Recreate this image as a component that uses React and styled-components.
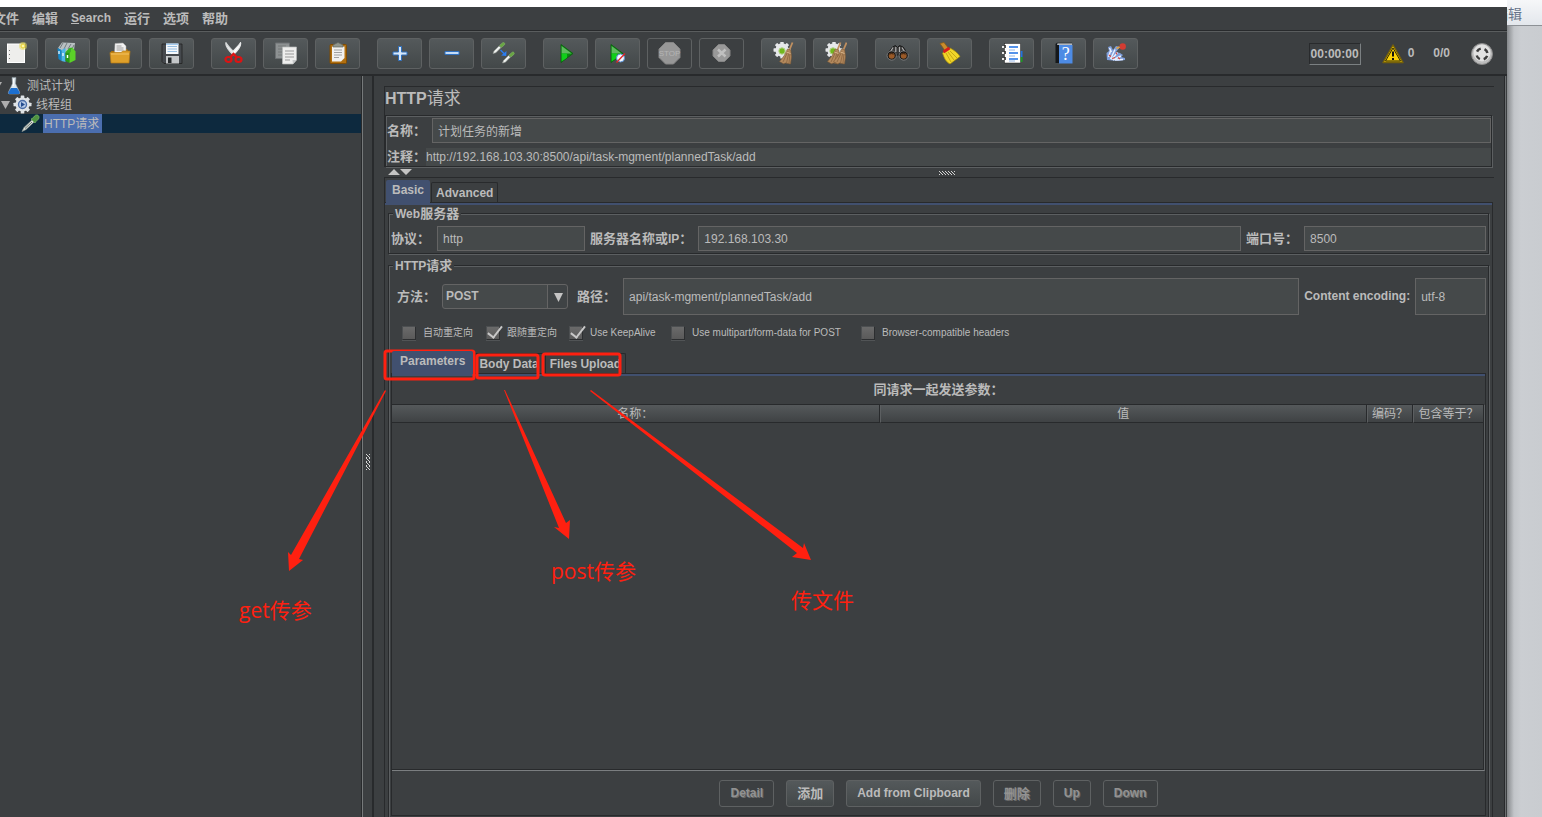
import React from 'react';
import styled, { createGlobalStyle, css } from 'styled-components';

const dark = '#282a2c';
const light = '#5c5f61';
const panel = '#3c3f41';
const text = '#bbbbbb';
const red = '#ff2010';

const GlobalStyle = createGlobalStyle`
  * {
    box-sizing: border-box;
  }
  html, body, #root {
    height: 100%;
  }
  body {
    margin: 0;
    overflow: hidden;
    background: #c9cdd1;
    color: ${text};
    font-family: 'Liberation Sans', 'Noto Sans CJK SC', sans-serif;
    font-size: 12px;
    line-height: 17px;
  }
  button, input, select {
    color: inherit;
    font: inherit;
  }
`;

const Screen = styled.div`
  position: relative;
  display: flex;
  height: 100%;
  overflow: hidden;
`;

const AppWindow = styled.div`
  display: flex;
  flex: 1;
  flex-direction: column;
  min-width: 0;
  margin-left: -7px;
  border-top: 7px solid #fff;
  background: ${panel};
`;

const Behind = styled.aside`
  flex: 0 0 35px;
  overflow: hidden;
  background: linear-gradient(90deg, #85888b, #c2c5c9 7px, #cbced2 14px, #c9ccd0);
`;

const BehindTab = styled.div`
  display: flex;
  justify-content: flex-end;
  width: 15px;
  height: 25px;
  padding-top: 6px;
  color: #66748a;
  font-size: 14px;
  white-space: nowrap;
`;

const BehindHeader = styled.div`
  height: 26px;
  border-bottom: 1px solid #8d9196;
  background: linear-gradient(#f6f7f9, #e3e7ec);
`;

const Cjk = styled.span`
  font-size: 13px;
`;

const MenuBar = styled.nav`
  display: flex;
  flex: none;
  gap: 13px;
  height: 25px;
  padding-bottom: 1px;
  border-bottom: 1px solid #5a5d5e;
  box-shadow: inset 0 -1px 0 ${dark};
`;

const MenuItem = styled.button`
  padding: 0;
  border: 0;
  background: none;
  font-weight: bold;
  line-height: 17px;
  white-space: nowrap;
`;

const Toolbar = styled.div`
  display: flex;
  flex: none;
  gap: 17px;
  height: 44px;
  padding: 6px 14px 5px 0;
  border-bottom: 2px solid ${dark};
`;

const ToolGroup = styled.div`
  display: flex;
  gap: 7px;
`;

const buttonFace = css`
  border: 1px solid #5e6162;
  border-radius: 3px;
  background: ${(p) => (p.disabled ? 'none' : 'linear-gradient(#54595b, #434849)')};
`;

const ToolButton = styled.button`
  ${buttonFace}
  display: flex;
  align-items: center;
  justify-content: center;
  width: 45px;
  height: 31px;
  padding: 0;
`;

const Status = styled.div`
  display: flex;
  align-items: center;
  height: 31px;
  margin-left: auto;
  font-weight: bold;
`;

const Timer = styled.span`
  height: 22px;
  padding: 0 1px;
  border: 1px solid;
  border-color: ${dark} #7b8082 #7b8082 ${dark};
  line-height: 20px;
`;

const StatusItem = styled.span`
  display: flex;
  gap: 4px;
  align-items: center;
  margin-left: ${(p) => p.$gap}px;
`;

const Main = styled.div`
  display: flex;
  flex: 1;
  min-height: 0;
`;

const Tree = styled.ul`
  flex: 0 0 370px;
  margin: 0;
  padding: 0 1px 0 0;
  border-right: 1px solid #76797a;
  box-shadow: inset -1px 0 0 ${dark};
  list-style: none;
`;

const TreeRow = styled.li`
  display: flex;
  align-items: center;
  gap: ${(p) => p.$gap || 3}px;
  height: 19px;
  padding-left: ${(p) => p.$indent}px;
  background: ${(p) => (p.$selected ? '#0d293e' : 'none')};
`;

const TreeLabel = styled.span`
  height: 19px;
  padding: 1px 3px 0 1px;
  background: ${(p) => (p.$selected ? '#4b6eaf' : 'none')};
  line-height: 18px;
`;

const Splitter = styled.div`
  display: flex;
  flex: 0 0 9px;
  align-items: center;
  justify-content: center;
  padding-top: 30px;
`;

const Editor = styled.main`
  display: flex;
  flex: 1;
  flex-direction: column;
  min-width: 0;
  margin-right: 1px;
  padding: 10px 11px 0 10px;
  border-right: 1px solid #6b6e70;
  border-left: 2px solid ${dark};
  box-shadow: inset -1px 0 0 ${dark};
`;

const etched = css`
  border: 1px solid ${dark};
  box-shadow: 1px 1px 0 ${light}, inset 1px 1px 0 ${light};
`;

const NamePanel = styled.section`
  flex: none;
  padding-right: 2px;
  border-top: 1px solid ${dark};
  border-left: 1px solid ${dark};
`;

const Title = styled.h1`
  height: 28px;
  margin: 0;
  font-size: 16px;
  line-height: 24px;
`;

const TitleCjk = styled.span`
  font-size: 17px;
  font-weight: normal;
`;

const NameBox = styled.div`
  ${etched}
  display: flex;
  flex-direction: column;
  gap: 5px;
  padding: 2px 0 0 1px;
`;

const Row = styled.div`
  display: flex;
  align-items: center;
`;

const Label = styled.label`
  flex: none;
  margin-right: ${(p) => (p.$right === undefined ? 7 : p.$right)}px;
  margin-left: ${(p) => p.$left || 0}px;
  font-weight: bold;
  white-space: nowrap;
`;

const Field = styled.input`
  flex: ${(p) => p.$size || 100} 1 ${(p) => p.$size || 100}px;
  min-width: 0;
  height: ${(p) => p.$height || 25}px;
  padding: 0 5px;
  border: 1px solid #646464;
  border-radius: 0;
  outline: 0;
  background: #45494a;
`;

const PlainField = styled(Field)`
  height: 18px;
  padding: 0;
  border: 0;
`;

const Divider = styled.div`
  display: flex;
  flex: none;
  align-items: center;
  justify-content: space-between;
  height: 10px;
  padding: 1px 0 0 4px;
`;

const DividerSpacer = styled.span`
  width: 12px;
`;

const TabPanel = styled.section`
  display: flex;
  flex: 1;
  flex-direction: column;
  min-height: 0;
  ${(p) =>
    p.$outer &&
    css`
      border-top: 1px solid ${dark};
      border-left: 1px solid ${dark};
    `}
`;

const Tabs = styled.div`
  display: flex;
  flex: none;
  gap: 1px;
  align-items: flex-end;
  height: ${(p) => p.$height}px;
  padding-left: 1px;
`;

const Tab = styled.button`
  height: 20px;
  padding: 2px 4px 0;
  border: 1px solid ${dark};
  border-bottom: 0;
  border-radius: 2px 2px 0 0;
  background: none;
  font-weight: bold;
  line-height: 17px;
  white-space: nowrap;
  ${(p) =>
    p['aria-selected'] &&
    css`
      z-index: 1;
      height: 23px;
      margin-bottom: -1px;
      padding: 0 ${p.$wide ? 8 : 6}px 2px;
      border: 0;
      background: #41506f;
    `}
`;

const Pane = styled.div`
  display: flex;
  flex: 1;
  flex-direction: column;
  min-height: 0;
  margin-right: 1px;
  padding: 2px 3px 0;
  border-top: 1px solid ${dark};
  border-right: 1px solid ${dark};
  box-shadow: inset 0 2px 0 #41506f;
`;

const InnerPane = styled(Pane)`
  margin: 0;
  padding: 0;
  border: 1px solid ${dark};
`;

const Group = styled.fieldset`
  ${etched}
  flex: none;
  min-width: 0;
  margin: 0 0 3px;
  padding: 4px 2px 2px;
`;

const RequestGroup = styled(Group)`
  display: flex;
  flex: 1;
  flex-direction: column;
  min-height: 0;
  margin: 0 0 -2px;
  padding: 4px 2px 2px;
`;

const Legend = styled.legend`
  height: 17px;
  margin-left: 2px;
  padding: 0 2px;
  background: ${panel};
  font-weight: bold;
`;

const SelectWrap = styled.div`
  position: relative;
  flex: 0 0 126px;
  height: 25px;
`;

const Select = styled.select`
  width: 100%;
  height: 25px;
  padding: 0 3px;
  border: 1px solid #646464;
  border-radius: 3px;
  appearance: none;
  background: linear-gradient(90deg, #45494a 104px, #646464 104px, #646464 105px, #3f4345 105px);
  font-weight: bold;
`;

const SelectArrow = styled.svg`
  position: absolute;
  top: 9px;
  right: 5px;
  pointer-events: none;
`;

const Checks = styled.div`
  display: grid;
  flex: none;
  grid-template-columns: 84px 83px 102px 190px auto;
  align-items: center;
  height: 35px;
  padding-left: 11px;
`;

const Check = styled.label`
  display: flex;
  gap: 7px;
  align-items: center;
  font-size: 10px;
  white-space: nowrap;
`;

const CheckBox = styled.input`
  flex: none;
  width: 14px;
  height: 14px;
  margin: 0;
  border: 1px solid;
  border-color: #4c4f51 #2c2e30 #2c2e30 #4c4f51;
  appearance: none;
  background: linear-gradient(#6a6a6a, #5a5a5a);
  box-shadow: 0 1px 0 #515456;

  &:checked::after {
    content: '';
    display: block;
    width: 6px;
    height: 13px;
    margin: -4px 0 0 4px;
    border: solid #c8c8c8;
    border-width: 0 2px 2px 0;
    transform: rotate(38deg);
  }
`;

const Caption = styled.div`
  flex: none;
  height: 30px;
  padding-top: 7px;
  font-weight: bold;
  text-align: center;
`;

const TableBox = styled.div`
  flex: 1;
  min-height: 0;
  border-top: 1px solid ${dark};
  border-right: 1px solid ${light};
  border-bottom: 1px solid #7b7e80;
  box-shadow: inset -1px -1px 0 ${dark};
`;

const Table = styled.table`
  width: 100%;
  border-spacing: 0;
  table-layout: fixed;
`;

const Th = styled.th`
  width: ${(p) => p.$width || 'auto'};
  height: 18px;
  padding: 1px 0 0;
  border-right: 1px solid ${dark};
  border-bottom: 1px solid ${dark};
  background: linear-gradient(#55595b, #3f4244);
  font-weight: normal;
  line-height: 16px;
  white-space: nowrap;

  & + & {
    border-left: 1px solid ${light};
  }
`;

const Actions = styled.div`
  display: flex;
  flex: none;
  gap: 12px;
  justify-content: center;
  padding: 9px 0 8px;
`;

const Action = styled.button`
  ${buttonFace}
  height: 27px;
  padding: 0 10px;
  font-weight: bold;
  white-space: nowrap;
  ${(p) =>
    p.disabled &&
    css`
      color: #929292;
      text-shadow: 1px 1px 0 #6a6a6a;
    `}
`;

const Marks = styled.svg`
  position: absolute;
  inset: 0;
  width: 100%;
  height: 100%;
  pointer-events: none;
`;

const Note = styled.span`
  position: absolute;
  top: ${(p) => p.$y}px;
  left: ${(p) => p.$x}px;
  color: ${red};
  font-family: 'Open Sans', 'Noto Sans CJK SC', sans-serif;
  font-size: 21px;
  line-height: 30px;
  white-space: nowrap;
`;

const Gear = ({ x, y, r, fill = '#e6e8ea' }) => (
  <g transform={`translate(${x} ${y})`} fill={fill}>
    <circle r={r * 0.78} />
    {[0, 45, 90, 135].map((a) => (
      <rect key={a} x={-r * 0.2} y={-r} width={r * 0.4} height={r * 2} rx="0.6" transform={`rotate(${a})`} />
    ))}
  </g>
);

const Dropper = () => (
  <>
    <path d="M1 11.5 2 9l5-5 1.8 1.8-5 5z" fill="#f0f2f0" stroke="#8e9690" strokeWidth=".6" />
    <path d="m7.5 3.5 2 2 1-1L12.300 3c.8-1 .5-1.800-.1-2.200-.7-.5-1.400-.3-2.100.4z" fill="#69a545" stroke="#8fc46a" strokeWidth=".5" />
  </>
);

const Broom = ({ x = 0 }) => (
  <g transform={`translate(${x} 0)`}>
    <path d="M20.500.5 17 9" stroke="#c09060" strokeWidth="1.800" />
    <path d="m15.500 7 3.200 1 .8 6.500-1 7.500-5-1-2 .8-4-2.300 4.500-5.500z" fill="#b48a5e" stroke="#7d5a36" strokeWidth=".6" />
    <path d="m16 9-5 11m6-10-2.500 11m3.500-10-1 10" stroke="#8a6540" strokeWidth=".8" />
    <path d="m14.500 10 4 1.500" stroke="#dcb98e" strokeWidth="1" />
  </g>
);

const PlayShape = () => (
  <>
    <path d="m0 0 12 9-12 9z" fill="#0b8a12" stroke="#07600b" strokeWidth=".8" />
    <path d="m.6 1.500 10 7.500H.6z" fill="#5fba5f" />
    <path d="m.6 9H6v4.200L.6 17z" fill="#10cf1a" />
  </>
);

const icons = {
  New: (
    <>
      <rect x="3.500" y="2" width="17" height="18.500" fill="#eeeeec" stroke="#fff" />
      <path d="M5.500 8v1m0 3v1m0 3v1" stroke="#777" />
      <circle cx="19" cy="4" r="4" fill="#e8dc5c" opacity=".55" />
      <circle cx="19" cy="4" r="2" fill="#fff7a8" stroke="#e6cf2e" />
    </>
  ),
  Templates: (
    <>
      <path d="m2 6 4-5.500 13 .5-1 7-9 3z" fill="#b9c0c2" />
      <path d="m4 6 3-5m1 6 3-6m1 6 3-5m1 5 2-4" stroke="#747c80" />
      <path d="m1.500 6 4 2v11l-3-2z" fill="#1487c9" />
      <path d="m5.500 8 4-2v14l-4-1z" fill="#4bb5ea" />
      <path d="M3 9v3m4-1v3" stroke="#fff" strokeWidth="1.200" />
      <path d="m9.500 10 4 1.500V21l-4-2z" fill="#259a14" />
      <path d="m13.500 11.500 3-6 3 4V18l-6 3z" fill="#5bd128" />
      <path d="m9.500 10 4-4 3-.5-3 6z" fill="#36b41c" />
      <path d="M11.500 13v3" stroke="#fff" strokeWidth="1.500" />
    </>
  ),
  Open: (
    <>
      <path d="M3 9h5l1-2h10l2 3v9H3z" fill="#a8700c" />
      <path d="m7 1.500 8-.5 3 3v9H6.500z" fill="#f2f2f2" stroke="#aaa" strokeWidth=".5" />
      <path d="M8.500 4h5m-5 2h7m-7 2h7" stroke="#9a9a9a" />
      <path d="M2 10.500h11l2-1.500h7l-1 12H3z" fill="#dfa02a" stroke="#b67a12" strokeWidth=".7" />
      <path d="M3 12h18" stroke="#f3c262" />
    </>
  ),
  Save: (
    <>
      <path d="M2 2h20v19.500H4l-2-2z" fill="#45494d" stroke="#222" strokeWidth=".8" />
      <path d="M6 1.500h12.500V12H6z" fill="#f5f8fb" />
      <path d="M7.500 4.500h9.500m-9.500 2.500h9.500m-9.500 2.500h9.500" stroke="#8cb8df" strokeWidth=".9" />
      <path d="M6 1.500h12.500V3H6z" fill="#a5cdf0" />
      <path d="M6 14h13v7.500H6z" fill="#c4c7c9" />
      <path d="M8 15.500h3.500V21H8z" fill="#24282a" />
    </>
  ),
  Cut: (
    <>
      <path d="M4 .7c-1 3 2 7 7 12l1.500-2C9 7 6 4 4 .7z" fill="#eceeee" stroke="#d5d8d9" strokeWidth="1.200" />
      <path d="M18.500.7c1 3-2 7-7 12L10 10.500C13 7 16.500 4 18.500.7z" fill="#fff" stroke="#e6e8e8" strokeWidth="1.200" />
      <ellipse cx="6.500" cy="17.500" rx="3" ry="2.500" fill="none" stroke="#dc1414" strokeWidth="2.200" />
      <ellipse cx="16.500" cy="17.500" rx="3" ry="2.500" fill="none" stroke="#dc1414" strokeWidth="2.200" />
      <path d="m8.500 15 3-3 3 3" fill="none" stroke="#dc1414" strokeWidth="2.400" />
    </>
  ),
  Copy: (
    <>
      <path d="M1.500 1h14v15.500h-14z" fill="#8d9192" stroke="#6c7072" />
      <path d="M4 4h8M4 7h6m-6 3h4m-4 3h4" stroke="#747879" />
      <path d="M8.500 5h14v13l-3.500 4H8.500z" fill="#eeeeed" stroke="#b5b7b8" strokeWidth=".7" />
      <path d="M11 9h9m-9 3h9m-9 3h9m-9 3h5" stroke="#999" />
      <path d="m22.500 18-3.500 4-.5-4z" fill="#c5c7c8" />
    </>
  ),
  Paste: (
    <>
      <rect x="4" y="2.500" width="16.500" height="19" rx="1" fill="#b06f10" stroke="#7f4c04" />
      <path d="M6 4.500h12.500V16L15 19.500H6z" fill="#f1f1f0" />
      <path d="M8 8h8m-8 2.500h8M8 13h8m-8 2.500h5" stroke="#a0a0a0" />
      <path d="M7 5V3l3-1.500 2-1 2 1L17 3v2z" fill="#90958d" stroke="#636860" strokeWidth=".7" />
    </>
  ),
  Expand: <path d="M10.500 4.500h3V10H19v3h-5.500v5.500h-3V13H5v-3h5.500z" fill="#d7e8fa" stroke="#2f70bf" />,
  Collapse: <path d="M5 9.500h14v3H5z" fill="#c4dcf7" stroke="#2f70bf" />,
  Toggle: (
    <>
      <Dropper />
      <g transform="translate(9.500 9.500)">
        <Dropper />
      </g>
      <path d="m8.500 8 4 4" stroke="#2b7cf0" strokeWidth="1.500" />
      <path d="m14.500 9-.3 5-5-.5z" fill="#2b7cf0" />
    </>
  ),
  Start: (
    <g transform="translate(7 2.500)">
      <PlayShape />
    </g>
  ),
  'Start no pauses': (
    <>
      <g transform="translate(5 2.500)">
        <PlayShape />
      </g>
      <circle cx="14.500" cy="16" r="4" fill="#f5f8ff" stroke="#5790d4" />
      <path d="m10.500 20.500 8.500-9" stroke="#df2727" strokeWidth="1.300" />
    </>
  ),
  Stop: (
    <>
      <path d="M7.500.5h8l6.500 6.500v8.500L15.500 22h-8L1 15.500V7z" fill="#979797" stroke="#848484" />
      <text x="11.500" y="14" textAnchor="middle" fill="#b5b5b5" fontSize="8">
        STOP
      </text>
    </>
  ),
  Shutdown: (
    <>
      <path d="M8.500 2.500h6l5.500 5.500v6l-5.500 5.500h-6L3 14V8z" fill="#999" stroke="#858585" />
      <path d="m8 7.500 7.500 7m0-7-7.500 7" stroke="#c0c0c0" strokeWidth="2.500" />
    </>
  ),
  Clear: (
    <>
      <Gear x="10" y="8" r="8.500" />
      <circle cx="10" cy="9" r="3.200" fill="#72b81e" stroke="#b7d38d" />
      <Broom />
    </>
  ),
  'Clear all': (
    <>
      <Gear x="10" y="8" r="8.500" />
      <circle cx="9" cy="9" r="3.200" fill="#72b81e" stroke="#b7d38d" />
      <Broom x={-4} />
      <Broom x={2} />
    </>
  ),
  Search: (
    <>
      <path d="M6.500 5 9.500 3.500l2 2 2-2L17 5l5 7-4 4-5-3h-2.500L6 16l-4.500-4z" fill="#383838" stroke="#1a1a1a" />
      <path d="m7 5.500-3 5m12-5 3 5M9.800 5v5m3.700-5v5" stroke="#b0b0b0" strokeWidth="1.200" />
      <circle cx="5.700" cy="13.500" r="4.600" fill="#161616" stroke="#8a8a8a" strokeWidth=".8" />
      <circle cx="17.700" cy="13.500" r="4.600" fill="#161616" stroke="#8a8a8a" strokeWidth=".8" />
      <circle cx="5.700" cy="13.700" r="3" fill="#9a5a28" />
      <circle cx="17.700" cy="13.700" r="3" fill="#9a5a28" />
      <path d="M3.500 12.500c1-1.500 3-1.500 4 0m8 0c1-1.500 3-1.500 4 0" stroke="#4a2c16" strokeWidth="1.200" />
    </>
  ),
  'Reset search': (
    <>
      <path d="M2 1.500 6 .5l5 6.500-3.500 3-3-5z" fill="#c98c2d" stroke="#8e5b10" strokeWidth=".7" />
      <path d="m4.500 11 7.500-5c4 2 8 5 10 8.500L12 22c-4-2-6-6-7.500-11z" fill="#f0d52a" stroke="#a88c06" strokeWidth=".7" />
      <path d="m8 11 5 9m-3-10 6 8m-4-9 7 7" stroke="#bd9c0c" strokeWidth=".8" />
      <path d="m5.500 10 6-4" stroke="#d81c1c" strokeWidth="3" />
    </>
  ),
  'Function helper': (
    <>
      <path d="M20 9h2.500v6H20z" fill="#2173dd" />
      <path d="M20 15h2.500v5H20z" fill="#1d9a24" />
      <rect x="4.500" y="1.500" width="16" height="19.500" fill="#fff" stroke="#222" strokeWidth=".5" />
      <path d="M9 5h9M9 11h9m-9 6h9" stroke="#1c6fe3" strokeWidth="1.400" />
      <path d="M9 8h6m-6 6h6m-6 5h6" stroke="#95b8e8" />
      <path d="M2 5h4M2 11h4m-4 6h4" stroke="#e8e8e8" strokeWidth="2" />
      <path d="M5 3v3m0 3v3m0 3v3" stroke="#222" strokeWidth="1.500" />
    </>
  ),
  Help: (
    <>
      <path d="M3.500 2 5 .8h15V21H3.500z" fill="#15181b" />
      <path d="M7 3h13.500v18.500H7z" fill="#4d8be4" />
      <path d="M5.500 1.500H20v1.200H5z" fill="#e8eef5" />
      <text x="13.700" y="18" textAnchor="middle" fill="#fff" fontFamily="Liberation Serif" fontSize="18">
        ?
      </text>
    </>
  ),
  Tools: (
    <>
      <path d="m3 18-.5-7L5 9 4 5l3-1 2 4 3-4 4 1-4 5 4 1 3 2-2 2 4 1v2l-7 1z" fill="#7f9fdc" />
      <path d="m4.500 15 2-6m0 8L11 7.500M7.500 17.500l6-7m-4.500 7.500 8-4M11 18l8-.5M5.500 6l2 4" stroke="#eaf1ff" strokeWidth="1.400" />
      <path d="m5 13 2 1.500m1 2 3-1m1-5 1 2m1 3 2 1.500" stroke="#d6463e" strokeWidth="1.200" />
      <circle cx="18.700" cy="4.500" r="3.200" fill="#d43c32" />
      <path d="m12.500 6.500 3-1.500" stroke="#e3a33c" strokeWidth="1.700" />
    </>
  ),
};

const groups = [
  ['New', 'Templates', 'Open', 'Save'],
  ['Cut', 'Copy', 'Paste'],
  ['Expand', 'Collapse', 'Toggle'],
  ['Start', 'Start no pauses', 'Stop', 'Shutdown'],
  ['Clear', 'Clear all'],
  ['Search', 'Reset search'],
  ['Function helper', 'Help', 'Tools'],
];

const disabledTools = ['Stop', 'Shutdown'];

const ToolIcon = ({ name }) => (
  <svg width="23" height="23" viewBox="0 0 23 23" fill="none" aria-hidden="true">
    {icons[name]}
  </svg>
);

const Grip = ({ width, height }) => (
  <svg width={width} height={height} aria-hidden="true">
    <defs>
      <pattern id={`grip${width}`} width="3" height="4" patternUnits="userSpaceOnUse">
        <path d="M0 0h1v1H0zM1 1h1v1H1zM2 2h1v1H2zM0 3h1v1H0z" fill="#d5d5d5" />
      </pattern>
    </defs>
    <rect width={width} height={height} fill={`url(#grip${width})`} />
  </svg>
);

const Triangle = () => (
  <svg width="9" height="8" aria-hidden="true">
    <path d="M0 0h9L4.500 8z" fill="#adadad" />
  </svg>
);

const TestPlanTree = () => (
  <Tree role="tree">
    <TreeRow role="treeitem" $indent={0} $gap={5}>
      <Triangle />
      <svg width="14" height="19" viewBox="0 0 14 19" aria-hidden="true">
        <path d="M5 1.500h4l-.5 6 4 8.500c.5 1.500 0 2-1.500 2H3c-1.500 0-2-.5-1.500-2l4-8.500z" fill="#dde6ec" stroke="#8c979e" strokeWidth=".6" />
        <path d="M4 12h6l2.500 4c.3 1.500 0 2-1.500 2H3c-1.500 0-1.800-.5-1.500-2z" fill="#1c6fd0" />
        <path d="m6.500 3-.3 7" stroke="#fff" />
      </svg>
      <TreeLabel>测试计划</TreeLabel>
    </TreeRow>
    <TreeRow role="treeitem" $indent={8}>
      <Triangle />
      <svg width="19" height="19" viewBox="0 0 19 19" aria-hidden="true">
        <Gear x="9.500" y="9.500" r="9" fill="#dfe3e6" />
        <circle cx="9.500" cy="9.500" r="4" fill="#b5c9e6" stroke="#4b6da6" strokeWidth="1.400" />
        <path d="m8 7 4 2.500L8 12z" fill="#234c8f" />
      </svg>
      <TreeLabel>线程组</TreeLabel>
    </TreeRow>
    <TreeRow role="treeitem" aria-selected $indent={28} $selected>
      <svg width="19" height="19" viewBox="0 0 19 19" fill="none" aria-hidden="true">
        <path d="m1 17.500 2-4L11 6l2 2-8 7.500z" fill="#dde2dd" stroke="#90968f" strokeWidth=".7" />
        <path d="m4 14.500 7-6.500" stroke="#66706a" />
        <path d="m10 5 4 4 1-1.500 2.500-2.500c1-1.500.5-3-.5-3.700-1-.6-2.500-.4-3.500.7L12 4z" fill="#4f9340" stroke="#7dbb6a" strokeWidth=".7" />
      </svg>
      <TreeLabel $selected>HTTP请求</TreeLabel>
    </TreeRow>
  </Tree>
);

const WebServer = () => (
  <Group>
    <Legend>
      Web<Cjk>服务器</Cjk>
    </Legend>
    <Row>
      <Label htmlFor="protocol">
        <Cjk>协议：</Cjk>
      </Label>
      <Field id="protocol" $size={148} defaultValue="http" />
      <Label htmlFor="server" $left={5} $right={6}>
        <Cjk>服务器名称或</Cjk>IP<Cjk>：</Cjk>
      </Label>
      <Field id="server" $size={543} defaultValue="192.168.103.30" />
      <Label htmlFor="port" $left={5} $right={6}>
        <Cjk>端口号：</Cjk>
      </Label>
      <Field id="port" $size={182} defaultValue="8500" />
    </Row>
  </Group>
);

const options = [
  { label: '自动重定向', checked: false },
  { label: '跟随重定向', checked: true },
  { label: 'Use KeepAlive', checked: true },
  { label: 'Use multipart/form-data for POST', checked: false },
  { label: 'Browser-compatible headers', checked: false },
];

const Parameters = () => (
  <TabPanel>
    <Tabs role="tablist" $height={23}>
      <Tab role="tab" aria-selected $wide>
        Parameters
      </Tab>
      <Tab role="tab">Body Data</Tab>
      <Tab role="tab">Files Upload</Tab>
    </Tabs>
    <InnerPane>
      <Caption>
        <Cjk>同请求一起发送参数：</Cjk>
      </Caption>
      <TableBox>
        <Table>
          <thead>
            <tr>
              <Th>名称：</Th>
              <Th>值</Th>
              <Th $width="46px">编码？</Th>
              <Th $width="71px">包含等于？</Th>
            </tr>
          </thead>
        </Table>
      </TableBox>
      <Actions>
        <Action disabled>Detail</Action>
        <Action>
          <Cjk>添加</Cjk>
        </Action>
        <Action>Add from Clipboard</Action>
        <Action disabled>
          <Cjk>删除</Cjk>
        </Action>
        <Action disabled>Up</Action>
        <Action disabled>Down</Action>
      </Actions>
    </InnerPane>
  </TabPanel>
);

const HttpRequest = () => (
  <RequestGroup>
    <Legend>
      HTTP<Cjk>请求</Cjk>
    </Legend>
    <Row>
      <Label htmlFor="method" $left={6} $right={6}>
        <Cjk>方法：</Cjk>
      </Label>
      <SelectWrap>
        <Select id="method" defaultValue="POST">
          <option>POST</option>
          <option>GET</option>
        </Select>
        <SelectArrow width="9" height="9" aria-hidden="true">
          <path d="M0 0h9L4.500 9z" fill="#c4c4c4" />
        </SelectArrow>
      </SelectWrap>
      <Label htmlFor="path" $left={9}>
        <Cjk>路径：</Cjk>
      </Label>
      <Field id="path" $size={678} $height={37} defaultValue="api/task-mgment/plannedTask/add" />
      <Label htmlFor="encoding" $left={5} $right={5}>
        Content encoding:
      </Label>
      <Field id="encoding" $size={71} $height={37} defaultValue="utf-8" />
    </Row>
    <Checks>
      {options.map((o) => (
        <Check key={o.label}>
          <CheckBox type="checkbox" defaultChecked={o.checked} />
          {o.label}
        </Check>
      ))}
    </Checks>
    <Parameters />
  </RequestGroup>
);

const Annotations = () => (
  <>
    <Marks aria-hidden="true">
      <g fill="none" stroke={red} strokeWidth="3">
        <rect x="385" y="351" width="89" height="28" rx="2" />
        <rect x="477" y="355" width="61" height="23" rx="2" />
        <rect x="543" y="354" width="77" height="21" rx="2" />
      </g>
      <g fill={red}>
        <path d="M385 390 291 555l-3-3 1 19 14-11-4-1 87-168z" />
        <path d="m504 390 55 138-5-1 15 12 1-19-4 3-61-133z" />
        <path d="m590 391 207 162-5 4 19 3-7-17-1 5-212-158z" />
      </g>
    </Marks>
    <Note $x={239} $y={595}>
      get传参
    </Note>
    <Note $x={551} $y={556}>
      post传参
    </Note>
    <Note $x={791} $y={585}>
      传文件
    </Note>
  </>
);

export default function App() {
  return (
    <Screen>
      <GlobalStyle />
      <AppWindow>
        <MenuBar>
          <MenuItem>
            <Cjk>文件</Cjk>
          </MenuItem>
          <MenuItem>
            <Cjk>编辑</Cjk>
          </MenuItem>
          <MenuItem>
            <u>S</u>earch
          </MenuItem>
          <MenuItem>
            <Cjk>运行</Cjk>
          </MenuItem>
          <MenuItem>
            <Cjk>选项</Cjk>
          </MenuItem>
          <MenuItem>
            <Cjk>帮助</Cjk>
          </MenuItem>
        </MenuBar>
        <Toolbar role="toolbar">
          {groups.map((names) => (
            <ToolGroup key={names[0]}>
              {names.map((name) => (
                <ToolButton key={name} aria-label={name} disabled={disabledTools.includes(name)}>
                  <ToolIcon name={name} />
                </ToolButton>
              ))}
            </ToolGroup>
          ))}
          <Status>
            <Timer>00:00:00</Timer>
            <StatusItem $gap={21}>
              <svg width="22" height="20" viewBox="0 0 22 20" aria-hidden="true">
                <path d="M11 1 21 18.500H1z" fill="#fbd206" stroke="#75600a" strokeWidth="1.500" strokeLinejoin="round" />
                <path d="M11 4 18.500 17h-15z" fill="none" stroke="#2a2508" strokeWidth="1" />
                <path d="M11 7.500v5m0 1.500v2" stroke="#111" strokeWidth="2" />
              </svg>
              0
            </StatusItem>
            <StatusItem $gap={19}>0/0</StatusItem>
            <StatusItem $gap={21}>
              <svg width="22" height="22" viewBox="0 0 22 22" fill="none" aria-hidden="true">
                <circle cx="11" cy="11" r="10.500" fill="#bdbdbd" stroke="#8b8b8b" />
                <circle cx="11" cy="10" r="8.500" fill="#e2e2e2" />
                <circle cx="11" cy="11" r="5.500" stroke="#3d3d3d" strokeWidth="2.500" strokeDasharray="4.640 4" strokeDashoffset="-2" />
              </svg>
            </StatusItem>
          </Status>
        </Toolbar>
        <Main>
          <TestPlanTree />
          <Splitter>
            <Grip width={4} height={16} />
          </Splitter>
          <Editor>
            <NamePanel>
              <Title>
                HTTP<TitleCjk>请求</TitleCjk>
              </Title>
              <NameBox>
                <Row>
                  <Label htmlFor="name" $right={6}>
                    <Cjk>名称：</Cjk>
                  </Label>
                  <Field id="name" defaultValue="计划任务的新增" />
                </Row>
                <Row>
                  <Label htmlFor="comment" $right={0}>
                    <Cjk>注释：</Cjk>
                  </Label>
                  <PlainField id="comment" defaultValue="http://192.168.103.30:8500/api/task-mgment/plannedTask/add" />
                </Row>
              </NameBox>
            </NamePanel>
            <Divider>
              <svg width="24" height="7" aria-hidden="true">
                <path d="M0 6 6 0l6 6zM12 0h12l-6 6z" fill="#c4c4c4" />
              </svg>
              <Grip width={16} height={4} />
              <DividerSpacer />
            </Divider>
            <TabPanel $outer>
              <Tabs role="tablist" $height={24}>
                <Tab role="tab" aria-selected>
                  Basic
                </Tab>
                <Tab role="tab">Advanced</Tab>
              </Tabs>
              <Pane>
                <WebServer />
                <HttpRequest />
              </Pane>
            </TabPanel>
          </Editor>
        </Main>
      </AppWindow>
      <Behind>
        <BehindHeader>
          <BehindTab>编辑</BehindTab>
        </BehindHeader>
      </Behind>
      <Annotations />
    </Screen>
  );
}
